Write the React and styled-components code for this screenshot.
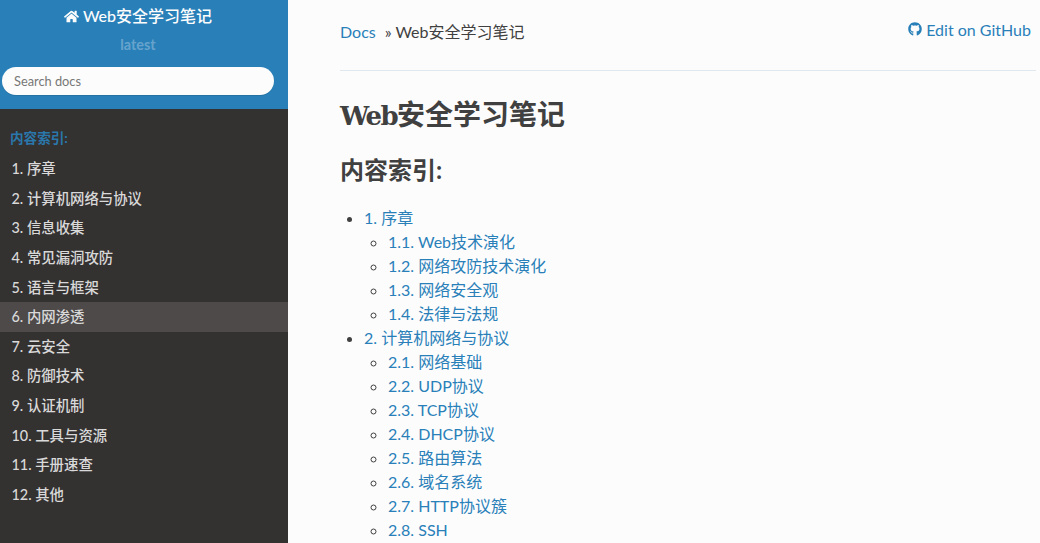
import React from "react";
import styled, { createGlobalStyle } from "styled-components";
import { FaHome, FaGithub } from "react-icons/fa";

const Global = createGlobalStyle`
  html, body { margin: 0; padding: 0; height: 100%; overflow: hidden; background: #fcfcfc; }
  #root { height: 100%; }
  * { box-sizing: border-box; }
`;
const CJK = `Lato, "Noto Sans CJK SC", sans-serif`;
const Page = styled.div`
  display: flex; width: 1040px; height: 543px; overflow: hidden;
  font-family: ${CJK}; font-size: 16px; color: #404040; background: #fcfcfc;
`;
const Sidebar = styled.nav`
  width: 288px; flex: none; background: #343131; color: #d9d9d9; display: flex; flex-direction: column;
`;
const SearchArea = styled.div`
  height: 109px; background: #2980b9; display: flex; flex-direction: column; align-items: center; padding: 4px 14px 0 2px;
`;
const Brand = styled.a`
  color: #fcfcfc; font-weight: 500; font-size: 16px; line-height: 24px; display: flex; align-items: center; gap: 4px;
  svg { width: 15px; height: 15px; }
`;
const Version = styled.div`
  color: rgba(255,255,255,.3); font-size: 14.4px; font-weight: 700; line-height: 18px; margin-top: 8px;
`;
const Search = styled.input`
  width: 272px; height: 28px; margin-top: 13px; border: 0; border-radius: 50px; background: #fcfcfc;
  padding: 0 12px; font: 400 12.8px ${CJK}; box-shadow: 0 1px 0 #2472a4; outline: none;
  &::placeholder { color: #777; opacity: 1; }
`;
const Menu = styled.div`
  padding-top: 20px; font-size: 14.4px;
`;
const Caption = styled.p`
  margin: 0 0 0 10px; height: 18px; line-height: 18px; color: #2a78ab; font-weight: 700; font-size: 13.6px;
`;
const NavList = styled.div` margin-top: 7px; `;
const NavItem = styled.a`
  display: block; padding: 0 11.5px; height: 29.65px; line-height: 29.65px; color: #d9d9d9; font-weight: 500;
  background: ${p => (p.$active ? "#4e4a4a" : "transparent")};
`;
const Main = styled.main`
  flex: 1; min-width: 0; padding: 18px 4px 0 52px; background: #fcfcfc;
`;
const Crumbs = styled.div`
  display: flex; align-items: center; height: 26px; font-size: 16px;
`;
const Link = styled.a` color: #2980b9; `;
const Sep = styled.span` margin-left: 9px; `;
const Edit = styled.a`
  margin: 0 5px 4px auto; color: #2980b9; display: flex; align-items: center; gap: 4px;
  svg { width: 14px; height: 14px; }
`;
const Rule = styled.hr`
  border: 0; border-top: 1px solid #dfe8ef; margin: 26px 0 0;
`;
const Title = styled.h1`
  margin: 25px 0 0; font: 700 28px/34px "Noto Sans CJK SC", sans-serif; color: #404040;
`;
const Slab = styled.span`
  font-family: "DejaVu Serif", serif; font-size: 26px; letter-spacing: -1.6px;
`;
const Sub = styled.h2`
  margin: 22px 0 0; font: 700 24px/30px ${CJK}; color: #404040;
`;
const Outer = styled.ul`
  margin: 21px 0 0; padding: 0 0 0 24px; list-style: disc; line-height: 24px;
`;
const Inner = styled.ul`
  margin: 0; padding: 0 0 0 24px; list-style: circle;
`;
const toc = [
  ["1. 序章", ["1.1. Web技术演化", "1.2. 网络攻防技术演化", "1.3. 网络安全观", "1.4. 法律与法规"]],
  ["2. 计算机网络与协议", ["2.1. 网络基础", "2.2. UDP协议", "2.3. TCP协议", "2.4. DHCP协议", "2.5. 路由算法", "2.6. 域名系统", "2.7. HTTP协议簇", "2.8. SSH"]],
];
const nav = ["1. 序章", "2. 计算机网络与协议", "3. 信息收集", "4. 常见漏洞攻防", "5. 语言与框架", "6. 内网渗透", "7. 云安全", "8. 防御技术", "9. 认证机制", "10. 工具与资源", "11. 手册速查", "12. 其他"];

export default function App() {
  return (
    <Page>
      <Global />
      <Sidebar>
        <SearchArea>
          <Brand><FaHome />Web安全学习笔记</Brand>
          <Version>latest</Version>
          <Search placeholder="Search docs" />
        </SearchArea>
        <Menu>
          <Caption>内容索引:</Caption>
          <NavList>
            {nav.map(n => <NavItem key={n} $active={n.startsWith("6.")}>{n}</NavItem>)}
          </NavList>
        </Menu>
      </Sidebar>
      <Main>
        <Crumbs>
          <Link>Docs</Link><Sep>»</Sep>&nbsp;Web安全学习笔记
          <Edit><FaGithub />Edit on GitHub</Edit>
        </Crumbs>
        <Rule />
        <Title><Slab>Web</Slab>安全学习笔记</Title>
        <Sub>内容索引:</Sub>
        <Outer>
          {toc.map(([t, kids]) => (
            <li key={t}><Link>{t}</Link>
              <Inner>{kids.map(k => <li key={k}><Link>{k}</Link></li>)}</Inner>
            </li>
          ))}
        </Outer>
      </Main>
    </Page>
  );
}
